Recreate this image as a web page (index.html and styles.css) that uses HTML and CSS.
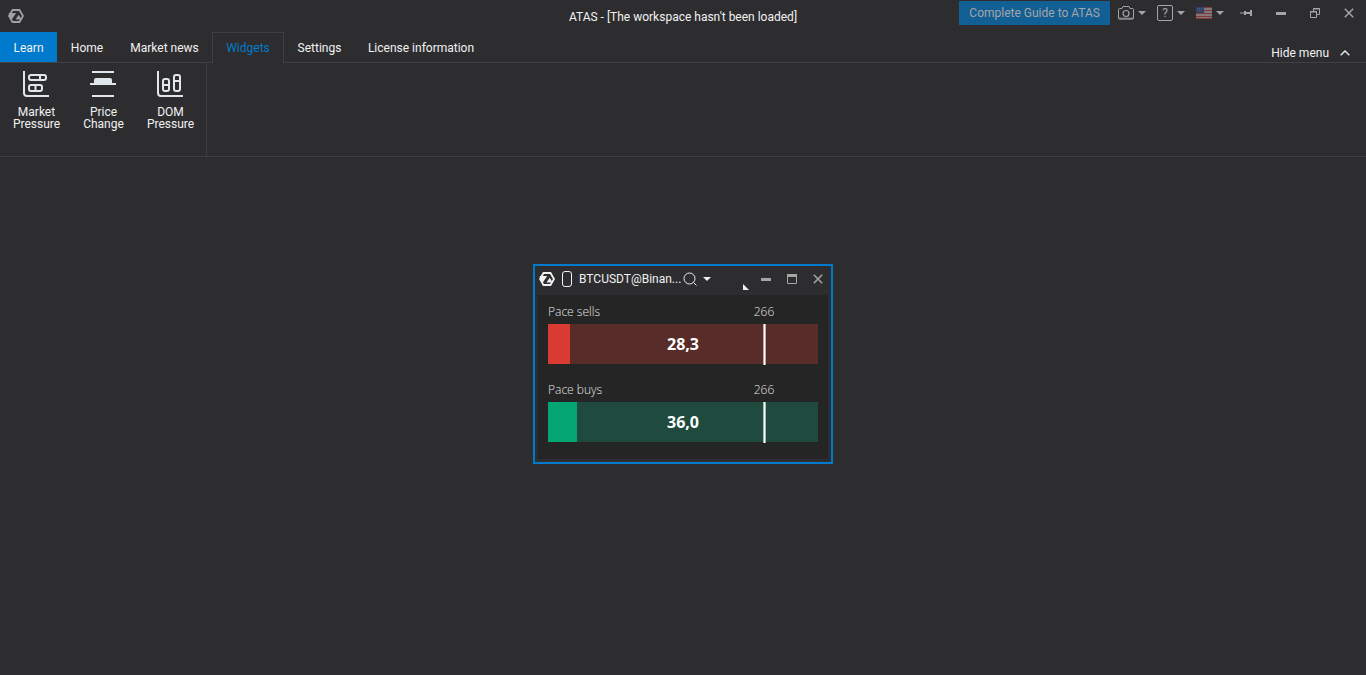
FILE: index.html
```
<!DOCTYPE html>
<html lang="en">
<head>
  <meta charset="UTF-8" />
  <meta name="viewport" content="width=device-width, initial-scale=1.0"/>
  <title>ATAS</title>
  <link rel="stylesheet" href="styles.css">
</head>
<body>
  <svg width="0" height="0" class="sprite">
    <symbol id="logo" viewBox="0 0 16 16">
      <path d="M4.500 2h7L15 8l-3.500 6h-7L1 8z" fill="none" stroke="currentColor" stroke-width="1.800"/>
      <path d="M.8 5h7.400L4 11.200 1 9.500z" fill="currentColor"/>
      <path d="M10.700 6.700l3 4.800H7.500z" fill="currentColor"/>
    </symbol>
    <symbol id="caret" viewBox="0 0 8 4">
      <path d="M0 0h8L4 4z" fill="currentColor"/>
    </symbol>
    <symbol id="minimize" viewBox="0 0 10 10">
      <path d="M0 4h10v3H0z" fill="currentColor"/>
    </symbol>
    <symbol id="close" viewBox="0 0 10 10">
      <path d="M.8.8l8.400 8.400M9.200.8L.8 9.200" stroke="currentColor" stroke-width="1.500"/>
    </symbol>
  </svg>

  <header class="titlebar">
    <svg class="logo" width="16" height="16"><use href="#logo"/></svg>
    <h1>ATAS - [The workspace hasn't been loaded]</h1>
    <div class="tools">
      <button class="guide">Complete Guide to ATAS</button>
      <button class="tool" aria-label="Screenshot">
        <svg width="16" height="14" viewBox="0 0 16 14" fill="none" stroke="currentColor">
          <path d="M.5 3.500q0-1 1-1h2.500l1-2h6l1 2H14.500q1 0 1 1v8.500q0 1-1 1h-13q-1 0-1-1z"/>
          <path d="M1 12.500h14" stroke-width="2" stroke-opacity=".5"/>
          <circle cx="8" cy="7.500" r="3" stroke-width="1.200"/>
        </svg>
        <svg width="8" height="4"><use href="#caret"/></svg>
      </button>
      <button class="tool" aria-label="Help">
        <span class="help">?</span>
        <svg width="8" height="4"><use href="#caret"/></svg>
      </button>
      <button class="tool" aria-label="Language">
        <svg width="16" height="12" viewBox="0 0 16 12">
          <path d="M0 0h16v12H0z" fill="#857779"/>
          <path d="M0 .5h16M0 3.500h16M0 6.500h16M0 9.500h16M0 11.500h16" stroke="#7d3b40"/>
          <path d="M0 0h8v6H0z" fill="#2f4164"/>
          <path d="M1 1.500h6M1 3.500h6" stroke="#4f5f7c" stroke-dasharray="1 1"/>
        </svg>
        <svg width="8" height="4"><use href="#caret"/></svg>
      </button>
      <button class="tool pin" aria-label="Pin">
        <svg width="12" height="6" viewBox="0 0 12 6" fill="currentColor">
          <path d="M0 2.500h4v1H0zM4 1h2v1h4V0h2v6h-2V4H6v1H4z"/>
        </svg>
      </button>
      <button class="tool win" aria-label="Minimize"><svg width="10" height="10"><use href="#minimize"/></svg></button>
      <button class="tool win" aria-label="Restore">
        <svg width="10" height="10" viewBox="0 0 10 10" fill="none" stroke="currentColor">
          <path d="M3.500 3V.5h6v6H7M3 1h7"/>
          <path d="M.5 3.500h6v6h-6zM0 4h7"/>
        </svg>
      </button>
      <button class="tool win" aria-label="Close"><svg width="10" height="10"><use href="#close"/></svg></button>
    </div>
  </header>

  <nav class="tabs">
    <a href="#" class="learn">Learn</a>
    <a href="#">Home</a>
    <a href="#">Market news</a>
    <a href="#" class="active">Widgets</a>
    <a href="#">Settings</a>
    <a href="#">License information</a>
    <button class="hide-menu">Hide menu
      <svg width="10" height="6" viewBox="0 0 10 6"><path d="M.7 5.300L5 1l4.300 4.300" fill="none" stroke="currentColor" stroke-width="1.300"/></svg>
    </button>
  </nav>

  <section class="ribbon">
    <div class="group">
      <button>
        <svg width="26" height="26" viewBox="0 0 26 26" fill="none" stroke="currentColor" stroke-width="2">
          <path d="M1 0v22q0 3 3 3h22"/>
          <rect x="6" y="4" width="17" height="5" rx="2"/>
          <rect x="6" y="14" width="13" height="6" rx="2"/>
          <path d="M17 4v5M12.500 14v6"/>
        </svg>
        Market<br>Pressure
      </button>
      <button>
        <svg width="26" height="26" viewBox="0 0 26 26" fill="currentColor">
          <path d="M2 0h22v2H2zM2 24h22v2H2zM0 12h4V9q0-2 2-2h14q2 0 2 2v3h4v2H0z"/>
        </svg>
        Price<br>Change
      </button>
      <button>
        <svg width="26" height="26" viewBox="0 0 26 26" fill="none" stroke="currentColor" stroke-width="2">
          <path d="M1 0v22q0 3 3 3h22"/>
          <rect x="6" y="8" width="6" height="12" rx="2"/>
          <rect x="17" y="4" width="6" height="16" rx="2"/>
          <path d="M6 14h6M17 10h6"/>
        </svg>
        DOM<br>Pressure
      </button>
    </div>
  </section>

  <main class="desktop">
    <div class="window">
      <div class="window-head">
        <svg width="16" height="16"><use href="#logo"/></svg>
        <span class="link-group"></span>
        <span class="symbol">BTCUSDT@Binan...</span>
        <button class="search" aria-label="Select instrument">
          <svg width="14" height="14" viewBox="0 0 14 14" fill="none" stroke="currentColor"><circle cx="6.500" cy="6.500" r="5.500"/><path d="M10.500 10.500l3 3"/></svg>
          <svg width="8" height="4"><use href="#caret"/></svg>
        </button>
        <svg class="corner" width="6" height="6" viewBox="0 0 6 6"><path d="M0 0v6h6z" fill="currentColor"/></svg>
        <div class="window-buttons">
          <button aria-label="Minimize"><svg width="10" height="10"><use href="#minimize"/></svg></button>
          <button aria-label="Maximize"><svg width="10" height="10" viewBox="0 0 10 10"><path d="M.5.5h9v9h-9z" fill="none" stroke="currentColor"/><path d="M0 0h10v3H0z" fill="currentColor"/></svg></button>
          <button aria-label="Close"><svg width="10" height="10"><use href="#close"/></svg></button>
        </div>
      </div>
      <div class="pace">
        <div class="labels"><span>Pace sells</span><span class="max">266</span></div>
        <div class="bar sells"><div class="fill" style="width: 8.1%"></div><strong>28,3</strong></div>
        <div class="labels"><span>Pace buys</span><span class="max">266</span></div>
        <div class="bar buys"><div class="fill" style="width: 10.7%"></div><strong>36,0</strong></div>
      </div>
    </div>
  </main>
</body>
</html>
```
FILE: styles.css
```
* {
  box-sizing: border-box;
}
body {
  margin: 0;
  min-height: 100vh;
  background: #2d2d30;
  color: #f1f1f1;
  font: 12px/16px Roboto, "Open Sans", sans-serif;
}
button {
  margin: 0;
  padding: 0;
  border: none;
  background: none;
  color: inherit;
  font: inherit;
  cursor: pointer;
}
a {
  color: inherit;
  text-decoration: none;
}
svg {
  display: block;
  flex: none;
}
.sprite {
  position: absolute;
}

/* title bar */
.titlebar {
  display: grid;
  grid-template-columns: 1fr auto 1fr;
  align-items: center;
  height: 32px;
}
.titlebar h1 {
  margin: 0;
  padding-top: 2px;
  font-size: 12px;
  font-weight: normal;
}
.logo {
  margin-left: 8px;
  color: #a0a0a1;
}
.tools {
  display: flex;
  align-items: center;
  justify-content: flex-end;
  height: 26px;
  margin-bottom: 6px;
  padding-right: 12px;
  color: #a5a5a6;
}
.guide {
  height: 24px;
  padding: 0 10px;
  margin-right: 8px;
  background: #125f95;
  white-space: nowrap;
}
.tool {
  display: flex;
  align-items: center;
  gap: 4px;
  margin-right: 11px;
}
.help {
  width: 16px;
  height: 16px;
  border: 1px solid;
  border-radius: 2px;
  line-height: 14px;
}
.pin {
  margin: 0 6px 0 5px;
}
.win {
  margin-left: 18px;
  margin-right: 6px;
}
.win:last-child {
  margin-right: 0;
}

/* tabs */
.tabs {
  display: grid;
  grid-template-columns: 57px 60px 95px 72px 71px 132px 1fr;
  height: 31px;
  border-bottom: 1px solid #3f3f46;
}
.tabs a {
  height: 30px;
  line-height: 32px;
  text-align: center;
}
.tabs .learn {
  background: #007acc;
}
.tabs .active {
  height: 31px;
  border: 1px solid #3f3f46;
  border-bottom: none;
  background: #2d2d30;
  color: #007acc;
  line-height: 30px;
}
.hide-menu {
  display: flex;
  align-items: center;
  gap: 11px;
  justify-self: end;
  padding: 11px 16px 0 0;
}

/* ribbon */
.ribbon {
  display: flex;
  height: 94px;
  border-bottom: 1px solid #3f3f46;
}
.group {
  display: flex;
  align-items: flex-start;
  padding: 8px 2px 0 3px;
  border-right: 1px solid #3f3f46;
}
.group button {
  width: 67px;
  line-height: 12px;
}
.group svg {
  margin: 0 20px 9px;
  color: #dfe6ec;
}

/* widget window */
.desktop {
  display: flex;
  justify-content: center;
  padding-top: 107px;
}
.window {
  width: 300px;
  padding: 0 3px 3px;
  border: 2px solid #007acc;
}
.window-head {
  display: flex;
  align-items: center;
  height: 29px;
  padding: 0 5px 3px 1px;
  white-space: nowrap;
}
.link-group {
  width: 10px;
  height: 16px;
  margin: 0 7px;
  border: 1px solid #f1f1f1;
  border-radius: 3px;
}
.search {
  display: flex;
  align-items: center;
  gap: 6px;
  margin-left: 2px;
}
.corner {
  align-self: flex-end;
  margin: 0 12px 2px auto;
}
.window-buttons {
  display: flex;
  gap: 16px;
  color: #a5a5a6;
}
.pace {
  height: 164px;
  padding: 9px 10px;
  background: #252526;
}
.labels {
  display: grid;
  grid-template-columns: 1fr 108px;
  height: 20px;
  color: #e4e4e4;
  font-family: "Open Sans", sans-serif;
  font-weight: 300;
}
.max {
  text-align: center;
}
.bar {
  position: relative;
  height: 40px;
  margin-bottom: 18px;
}
.bar strong {
  position: absolute;
  inset: 0;
  color: #fff;
  font-family: "Open Sans", sans-serif;
  font-size: 16px;
  line-height: 40px;
  text-align: center;
}
.fill {
  height: 100%;
}
/* threshold marker */
.bar::after {
  content: "";
  position: absolute;
  top: 0;
  left: 80%;
  width: 1px;
  height: 41px;
  margin-left: -1px;
  border: solid rgba(255, 255, 255, 0.6);
  border-width: 0 1px;
  background: #fff;
  background-clip: padding-box;
}
.sells {
  background: #582c29;
}
.sells .fill {
  background: #d93a31;
}
.buys {
  background: #1e4b3e;
}
.buys .fill {
  background: #03a672;
}
```
